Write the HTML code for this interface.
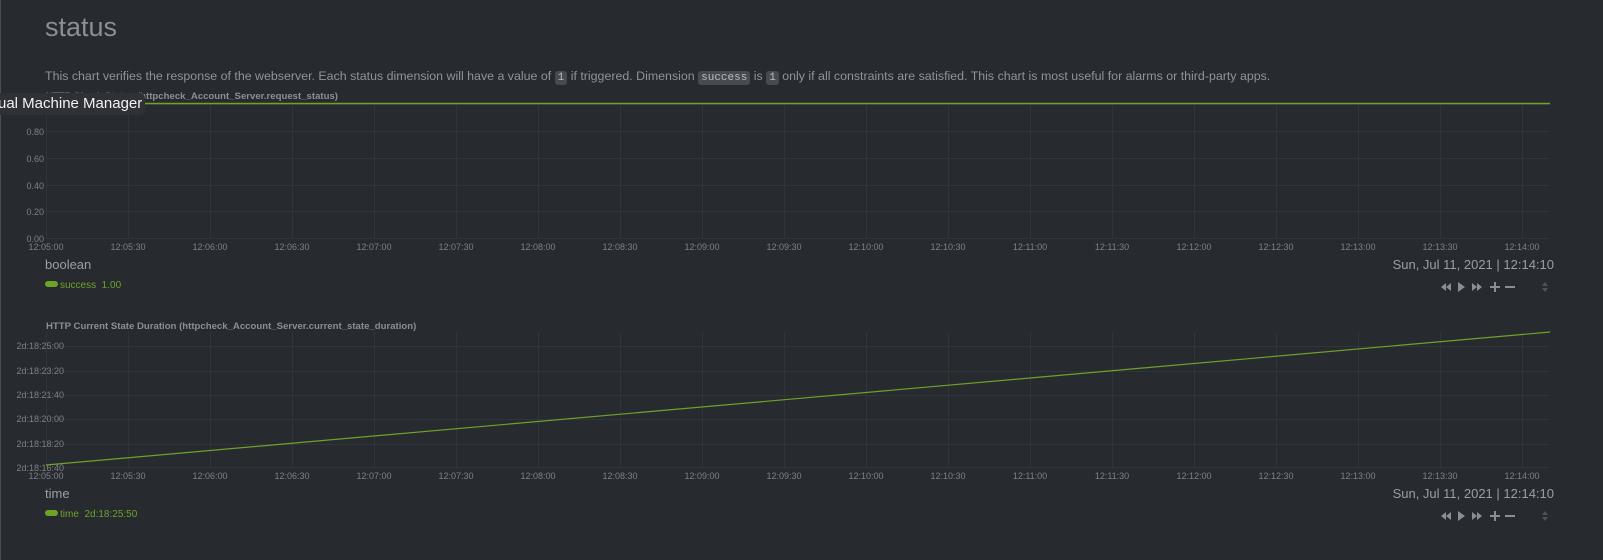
<!DOCTYPE html>
<html><head><style>
html,body{margin:0;padding:0;width:1603px;height:560px;overflow:hidden;background:#272a2e;font-family:"Liberation Sans",sans-serif;}
.lb{position:absolute;left:0;top:0;width:1px;height:560px;background:#4a4e54;}
h1{position:absolute;left:45px;top:12px;margin:0;font-weight:normal;font-size:27px;color:#8a8f96;}
.desc{position:absolute;left:45px;top:69px;font-size:12.4px;color:#8f949a;white-space:nowrap;}
code{font-family:"Liberation Mono",monospace;font-size:11px;background:#474b50;color:#b8bcc0;padding:1px 3px;border-radius:3px;}
.tip{position:absolute;left:0;top:93px;width:145px;height:22px;background:#2e3135;border-radius:0 5px 5px 0;color:#f2f2f2;font-size:15px;line-height:22px;}
.tip span{margin-left:-2px;}
.unit{position:absolute;left:45px;font-size:13px;color:#9a9fa5;}
.date{position:absolute;right:49px;font-size:13px;color:#9a9fa5;}
.leg{position:absolute;left:45px;font-size:10px;color:#6ea32a;}
.leg i{display:inline-block;width:13px;height:6px;border-radius:3px;background:#6ea32a;margin-right:2px;vertical-align:1px;}
</style></head><body>
<div class="lb"></div>
<h1>status</h1>
<div class="desc">This chart verifies the response of the webserver. Each status dimension will have a value of <code>1</code> if triggered. Dimension <code>success</code> is <code>1</code> only if all constraints are satisfied. This chart is most useful for alarms or third-party apps.</div>
<svg width="1603" height="560" style="position:absolute;left:0;top:0" font-family="Liberation Sans,sans-serif">
<g stroke="#30353a" stroke-width="1">
<line x1="46" y1="104.5" x2="1550" y2="104.5"/><line x1="46" y1="131.5" x2="1550" y2="131.5"/><line x1="46" y1="158.5" x2="1550" y2="158.5"/><line x1="46" y1="185.5" x2="1550" y2="185.5"/><line x1="46" y1="211.5" x2="1550" y2="211.5"/><line x1="46" y1="238.5" x2="1550" y2="238.5"/>
<line x1="46" y1="346.5" x2="1550" y2="346.5"/><line x1="46" y1="371.5" x2="1550" y2="371.5"/><line x1="46" y1="395.5" x2="1550" y2="395.5"/><line x1="46" y1="419.5" x2="1550" y2="419.5"/><line x1="46" y1="444.5" x2="1550" y2="444.5"/><line x1="46" y1="467.5" x2="1550" y2="467.5"/>
</g>
<g id="vg" stroke="#30353a"></g>
<text x="46" y="99" font-size="9.6" font-weight="bold" fill="#8a8f96">HTTP Check Status (httpcheck_Account_Server.request_status)</text>
<text x="46" y="329" font-size="9.6" font-weight="bold" fill="#8a8f96">HTTP Current State Duration (httpcheck_Account_Server.current_state_duration)</text>
<g font-size="9" fill="#7d8288" text-anchor="end">
<text x="44" y="135">0.80</text><text x="44" y="162">0.60</text><text x="44" y="189">0.40</text><text x="44" y="215">0.20</text><text x="44" y="242">0.00</text>
<text x="64" y="349">2d:18:25:00</text><text x="64" y="374">2d:18:23:20</text><text x="64" y="398">2d:18:21:40</text><text x="64" y="422">2d:18:20:00</text><text x="64" y="447">2d:18:18:20</text><text x="64" y="471">2d:18:16:40</text>
</g>
<g id="xl" font-size="9" fill="#7d8288" text-anchor="middle"></g>
<line x1="46" y1="103.5" x2="1550" y2="103.5" stroke="#6ea32a" stroke-width="1.5"/>
<line x1="46" y1="465" x2="1550" y2="332" stroke="#6ea32a" stroke-width="1.2"/>
<g id="ctl1" fill="#8a8f96" transform="translate(0,287)">
<path d="M1441 0l5-4v8z M1446 0l5-4v8z M1458-5l7 5-7 5z M1472-4l5 4-5 4z M1477-4l5 4-5 4z M1490-1h10v2h-10z M1494-5h2v10h-2z M1505-1h10v2h-10z"/>
<path d="M1545-5l-3 4h6z M1545 5l-3-4h6z" fill="#4f5358"/>
</g>
<use href="#ctl1" transform="translate(0,229)"/>
</svg>
<script>
var vg=document.getElementById('vg'),xl=document.getElementById('xl'),ns='http://www.w3.org/2000/svg';
var t=['12:05:00','12:05:30','12:06:00','12:06:30','12:07:00','12:07:30','12:08:00','12:08:30','12:09:00','12:09:30','12:10:00','12:10:30','12:11:00','12:11:30','12:12:00','12:12:30','12:13:00','12:13:30','12:14:00'];
for(var i=0;i<19;i++){var x=46+82*i;
[[104,238],[332,467]].forEach(function(r){var l=document.createElementNS(ns,'line');l.setAttribute('x1',x+.5);l.setAttribute('x2',x+.5);l.setAttribute('y1',r[0]);l.setAttribute('y2',r[1]);vg.appendChild(l);});
[250,479].forEach(function(y){var s=document.createElementNS(ns,'text');s.setAttribute('x',x);s.setAttribute('y',y);s.textContent=t[i];xl.appendChild(s);});}
</script>
<div class="tip"><span>ual Machine Manager</span></div>
<div class="unit" style="top:257px">boolean</div>
<div class="date" style="top:257px">Sun, Jul 11, 2021 | 12:14:10</div>
<div class="leg" style="top:280px"><i></i>success&nbsp; 1.00</div>
<div class="unit" style="top:486px">time</div>
<div class="date" style="top:486px">Sun, Jul 11, 2021 | 12:14:10</div>
<div class="leg" style="top:509px"><i></i>time&nbsp; 2d:18:25:50</div>
</body></html>
